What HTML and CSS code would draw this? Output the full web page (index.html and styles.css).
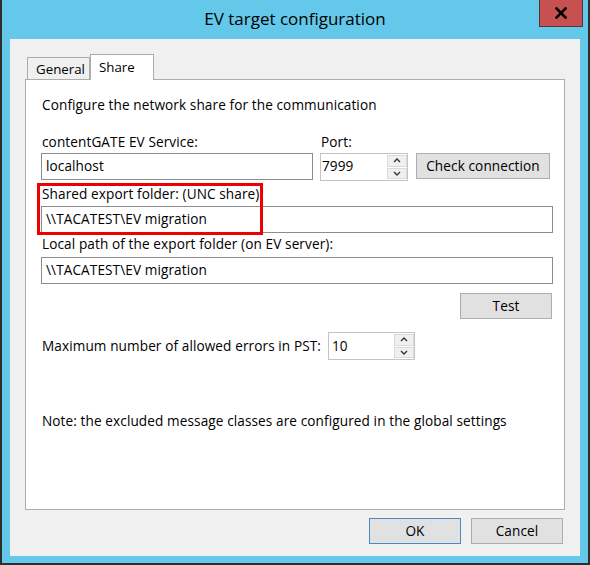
FILE: index.html
```html
<!DOCTYPE html>
<html>
<head>
<meta charset="utf-8">
<link rel="stylesheet" href="styles.css">
</head>
<body>
<div class="window">
  <div class="titlebar">
    <div class="title">EV target configuration</div>
    <div class="close">
      <svg width="12" height="12" viewBox="0 0 12 12"><path d="M1.5 1.5 L10.5 10.5 M10.5 1.5 L1.5 10.5" stroke="#000" stroke-width="2.6" stroke-linecap="square"/></svg>
    </div>
  </div>
  <div class="client">
    <div class="tabs">
      <div class="tab general">General</div>
      <div class="tab active">Share</div>
    </div>
    <div class="panel">
      <div class="intro">Configure the network share for the communication</div>
      <div class="grid1">
        <div class="label">contentGATE EV Service:</div>
        <div class="label">Port:</div>
        <div></div>
        <div class="input">localhost</div>
        <div class="spin spin-port">
          <div class="spin-val">7999</div>
          <div class="spin-btns">
            <div class="sbtn"><svg width="8" height="5" viewBox="0 0 8 5"><polyline points="1,4 4,1 7,4" fill="none" stroke="#333" stroke-width="1.4"/></svg></div>
            <div class="sbtn"><svg width="8" height="5" viewBox="0 0 8 5"><polyline points="1,1 4,4 7,1" fill="none" stroke="#333" stroke-width="1.4"/></svg></div>
          </div>
        </div>
        <div class="btn btn-check">Check connection</div>
      </div>
      <div class="label lbl2">Shared export folder: (UNC share)</div>
      <div class="input full in2">\\TACATEST\EV migration</div>
      <div class="label lbl3">Local path of the export folder (on EV server):</div>
      <div class="input full in3">\\TACATEST\EV migration</div>
      <div class="testrow"><div class="btn btn-test">Test</div></div>
      <div class="errrow">
        <div class="label errlbl">Maximum number of allowed errors in PST:</div>
        <div class="spin spin-err">
          <div class="spin-val">10</div>
          <div class="spin-btns">
            <div class="sbtn"><svg width="8" height="5" viewBox="0 0 8 5"><polyline points="1,4 4,1 7,4" fill="none" stroke="#333" stroke-width="1.4"/></svg></div>
            <div class="sbtn"><svg width="8" height="5" viewBox="0 0 8 5"><polyline points="1,1 4,4 7,1" fill="none" stroke="#333" stroke-width="1.4"/></svg></div>
          </div>
        </div>
      </div>
      <div class="note">Note: the excluded message classes are configured in the global settings</div>
      <div class="highlight"></div>
    </div>
    <div class="footer">
      <div class="btn btn-ok">OK</div>
      <div class="btn btn-cancel">Cancel</div>
    </div>
  </div>
</div>
</body>
</html>
```
FILE: styles.css
```css
* { box-sizing: border-box; }
html, body { margin: 0; padding: 0; background: #2b2b2b; }
body { width: 590px; height: 565px; overflow: hidden; font-family: "Open Sans", "Noto Sans", sans-serif; font-size: 13.6px; letter-spacing: 0.1px; color: #000; }

.window {
  width: 590px; height: 565px;
  background: #63c8e9;
  border: 2px solid #2d2d2d;
  border-top: 0;
  display: flex; flex-direction: column;
  position: relative;
}
.titlebar {
  height: 39px;
  display: flex; align-items: center; justify-content: center;
  position: relative;
}
.title { font-size: 17px; letter-spacing: 0; color: #000; margin-top: -2px; margin-left: 0; }
.close {
  position: absolute; top: 0; right: 5px;
  width: 44px; height: 27px;
  background: #c75050;
  border: 1px solid #4a3a3a; border-top: 0;
  display: flex; align-items: center; justify-content: center;
}
.client {
  margin: 0 8px;
  height: 517px;
  background: #f0f0f0;
  padding: 15px 15px 0 15px;
}
.tabs { display: flex; align-items: flex-end; height: 25px; padding-left: 2px; }
.tab {
  height: 22px;
  border: 1px solid #acacac; border-bottom: 0;
  background: #f0f0f0;
  line-height: 22px;
  font-size: 13.3px;
  letter-spacing: 0;
  white-space: nowrap;
}
.tab.general { width: 63px; padding-left: 8px; }
.tab.active {
  width: 64px;
  height: 26px; background: #fff; margin-bottom: -1px; position: relative; z-index: 1;
  padding-left: 8px; line-height: 24px;
}
.panel {
  width: 540px; height: 431px;
  background: #fff;
  border: 1px solid #adadad;
  padding: 17px 12px 0 15px;
  position: relative;
}
.intro, .label, .note { height: 16px; line-height: 16px; padding-left: 1px; white-space: nowrap; }
.grid1 {
  margin-top: 21px;
  display: grid;
  grid-template-columns: 272px 88px 135px;
  column-gap: 7px;
  row-gap: 3px;
  align-items: start;
}
.grid1 .btn-check { margin-left: 1px; }
.input {
  height: 27px;
  border: 1px solid #8c8c8c;
  background: #fff;
  line-height: 24px;
  padding-left: 4px;
  white-space: nowrap;
}
.full { width: 512px; }
.lbl2 { margin-top: 5px; }
.in2 { margin-top: 4px; }
.lbl3 { margin-top: 3px; }
.in3 { margin-top: 5px; }
.spin {
  height: 28px;
  border: 1px solid #c4c4c4;
  background: #fff;
  display: flex;
}
.spin-val { flex: 1; line-height: 24px; padding-left: 1px; }
.spin-btns { width: 20px; display: flex; flex-direction: column; padding: 1px 0; gap: 1px; }
.sbtn {
  flex: 1; background: #f0f0f0; border: 1px solid #dadada;
  display: flex; align-items: center; justify-content: center;
}
.btn {
  height: 26px;
  background: #e1e1e1;
  border: 1px solid #adadad;
  text-align: center;
  line-height: 24px;
  white-space: nowrap;
}
.testrow { display: flex; justify-content: flex-end; margin-top: 9px; width: 511px; }
.btn-test { width: 92px; }
.errrow { display: flex; align-items: center; margin-top: 13px; }
.errlbl { width: 287px; }
.spin-err { width: 87px; }
.spin-err .spin-val { padding-left: 3px; line-height: 25px; }
.note { margin-top: 53px; }
.highlight {
  position: absolute;
  left: 11px; top: 103px;
  width: 226px; height: 52px;
  border: 3px solid #ee0000;
}
.footer {
  display: flex; justify-content: flex-end; gap: 10px;
  margin-top: 8px; padding-right: 2px;
}
.btn-ok, .btn-cancel { width: 92px; }
.btn-ok { border-color: #4b8bc4; }
```
